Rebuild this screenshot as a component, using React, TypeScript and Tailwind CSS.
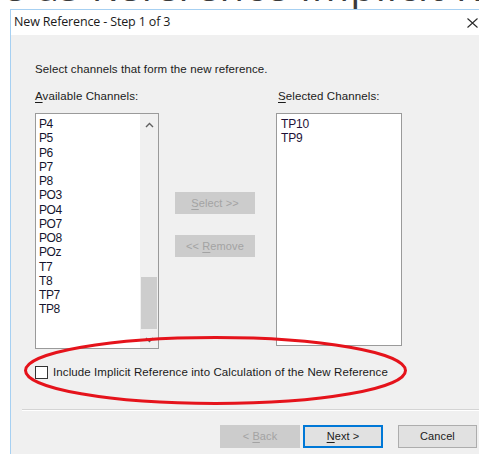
import React from "react";

const available = ["P4", "P5", "P6", "P7", "P8", "PO3", "PO4", "PO7", "PO8", "POz", "T7", "T8", "TP7", "TP8"];
const selected = ["TP10", "TP9"];

function Ul({ c }: { c: string }) {
  return <span className="underline underline-offset-[2px] decoration-[1px]">{c}</span>;
}

function ScrollBar() {
  return (
    <div className="w-[18px] h-full bg-[#f0f0f0] flex flex-col items-center">
      <div className="h-[17px] w-full flex items-center justify-center mt-[2px]">
        <svg width="9" height="6" viewBox="0 0 9 6">
          <path d="M1 5 L4.5 1.5 L8 5" fill="none" stroke="#606060" strokeWidth="1.4" />
        </svg>
      </div>
      <div className="flex-1 w-full flex flex-col justify-end px-[1px]">
        <div className="h-[52px] w-full bg-[#cdcdcd] mb-[2px]" />
      </div>
      <div className="h-[17px] w-full flex items-center justify-center">
        <svg width="9" height="6" viewBox="0 0 9 6">
          <path d="M1 1 L4.5 4.5 L8 1" fill="none" stroke="#606060" strokeWidth="1.4" />
        </svg>
      </div>
    </div>
  );
}

export default function App() {
  return (
    <div className="w-[479px] h-[454px] overflow-hidden bg-white relative font-['Liberation_Sans',Arial,sans-serif] text-[#1b1b1b]">
      {/* document text above the dialog, mostly out of view */}
      <div className="h-[9px] overflow-hidden">
        <div className="h-[40px] mt-[-34px] ml-[2px] whitespace-nowrap text-[40px] leading-[40px] text-[#3a3a3a] font-['Open_Sans',sans-serif] tracking-[1px]">
          e as Reference Implicit Reference
        </div>
      </div>

      <div className="ml-[10px] w-[469px] h-[445px] border-l border-t border-[#a6d0f2] flex flex-col">
        {/* title bar */}
        <div className="h-[25px] bg-white flex items-center justify-between pl-[3px]">
          <span className="text-[12.5px] font-['Open_Sans',sans-serif] tracking-[-0.15px] text-[#1a1a1a]">
            New Reference - Step 1 of 3
          </span>
          <svg width="11" height="10" viewBox="0 0 11 10" className="mr-[1px]">
            <path d="M0.5 0.5 L10.5 9.5 M10.5 0.5 L0.5 9.5" stroke="#2a2a2a" strokeWidth="1.1" />
          </svg>
        </div>

        {/* dialog body */}
        <div className="flex-1 bg-[#f0f0f0] flex flex-col text-[11.5px] leading-[13px] tracking-[0.1px]">
          <div className="pl-[24px] pt-[28px]">Select channels that form the new reference.</div>

          <div className="pl-[24px] mt-[14px] flex">
            <div className="w-[243px]">
              <Ul c="A" />vailable Channels:
            </div>
            <div>
              <Ul c="S" />elected Channels:
            </div>
          </div>

          <div className="pl-[24px] mt-[10px] flex items-start">
            {/* available list */}
            <div className="w-[124px] h-[236px] bg-white border border-[#9a9a9a] flex">
              <div className="flex-1 pl-[3px] pt-[3px] text-[12px] leading-[14.25px] text-[#14142e] tracking-[-0.4px]">
                {available.map((ch) => (
                  <div key={ch}>{ch}</div>
                ))}
              </div>
              <ScrollBar />
            </div>

            {/* move buttons */}
            <div className="ml-[16px] mt-[79px] flex flex-col gap-[21px] text-[11px]">
              <div className="w-[80px] h-[22px] bg-[#cccccc] text-[#a3a3a3] flex items-center justify-center">
                <span>
                  <Ul c="S" />elect &gt;&gt;
                </span>
              </div>
              <div className="w-[80px] h-[22px] bg-[#cccccc] text-[#a3a3a3] flex items-center justify-center">
                <span>
                  &lt;&lt; <Ul c="R" />emove
                </span>
              </div>
            </div>

            {/* selected list */}
            <div className="ml-[21px] w-[126px] h-[233px] bg-white border border-[#9a9a9a] pl-[4px] pt-[3px] text-[12px] leading-[14px] text-[#1e1238] tracking-[-0.2px]">
              {selected.map((ch) => (
                <div key={ch}>{ch}</div>
              ))}
            </div>
          </div>

          <div className="pl-[24px] mt-[17px] flex items-center">
            <div className="w-[13px] h-[13px] bg-white border border-[#333333]" />
            <span className="ml-[5px]">Include Implicit Reference into Calculation of the New Reference</span>
          </div>

          <div className="ml-[11px] mt-[30px] h-[1px] bg-[#d4d4d4] border-b border-white box-content" />

          <div className="pl-[209px] mt-[14px] flex items-center text-[11px]">
            <div className="w-[80px] h-[23px] bg-[#cccccc] text-[#a3a3a3] flex items-center justify-center">
              <span>
                &lt; <Ul c="B" />ack
              </span>
            </div>
            <div className="ml-[3px] w-[80px] h-[23px] bg-[#e1e1e1] border-2 border-[#0078d7] flex items-center justify-center">
              <span>
                <Ul c="N" />ext &gt;
              </span>
            </div>
            <div className="ml-[15px] w-[79px] h-[23px] bg-[#e1e1e1] border border-[#adadad] flex items-center justify-center">
              Cancel
            </div>
          </div>
        </div>
      </div>

      {/* red annotation ring around the checkbox */}
      <svg className="absolute left-0 top-0 pointer-events-none" width="479" height="454" viewBox="0 0 479 454">
        <ellipse cx="215.5" cy="370.5" rx="190" ry="33" fill="none" stroke="#e5131b" strokeWidth="3" />
      </svg>
    </div>
  );
}
